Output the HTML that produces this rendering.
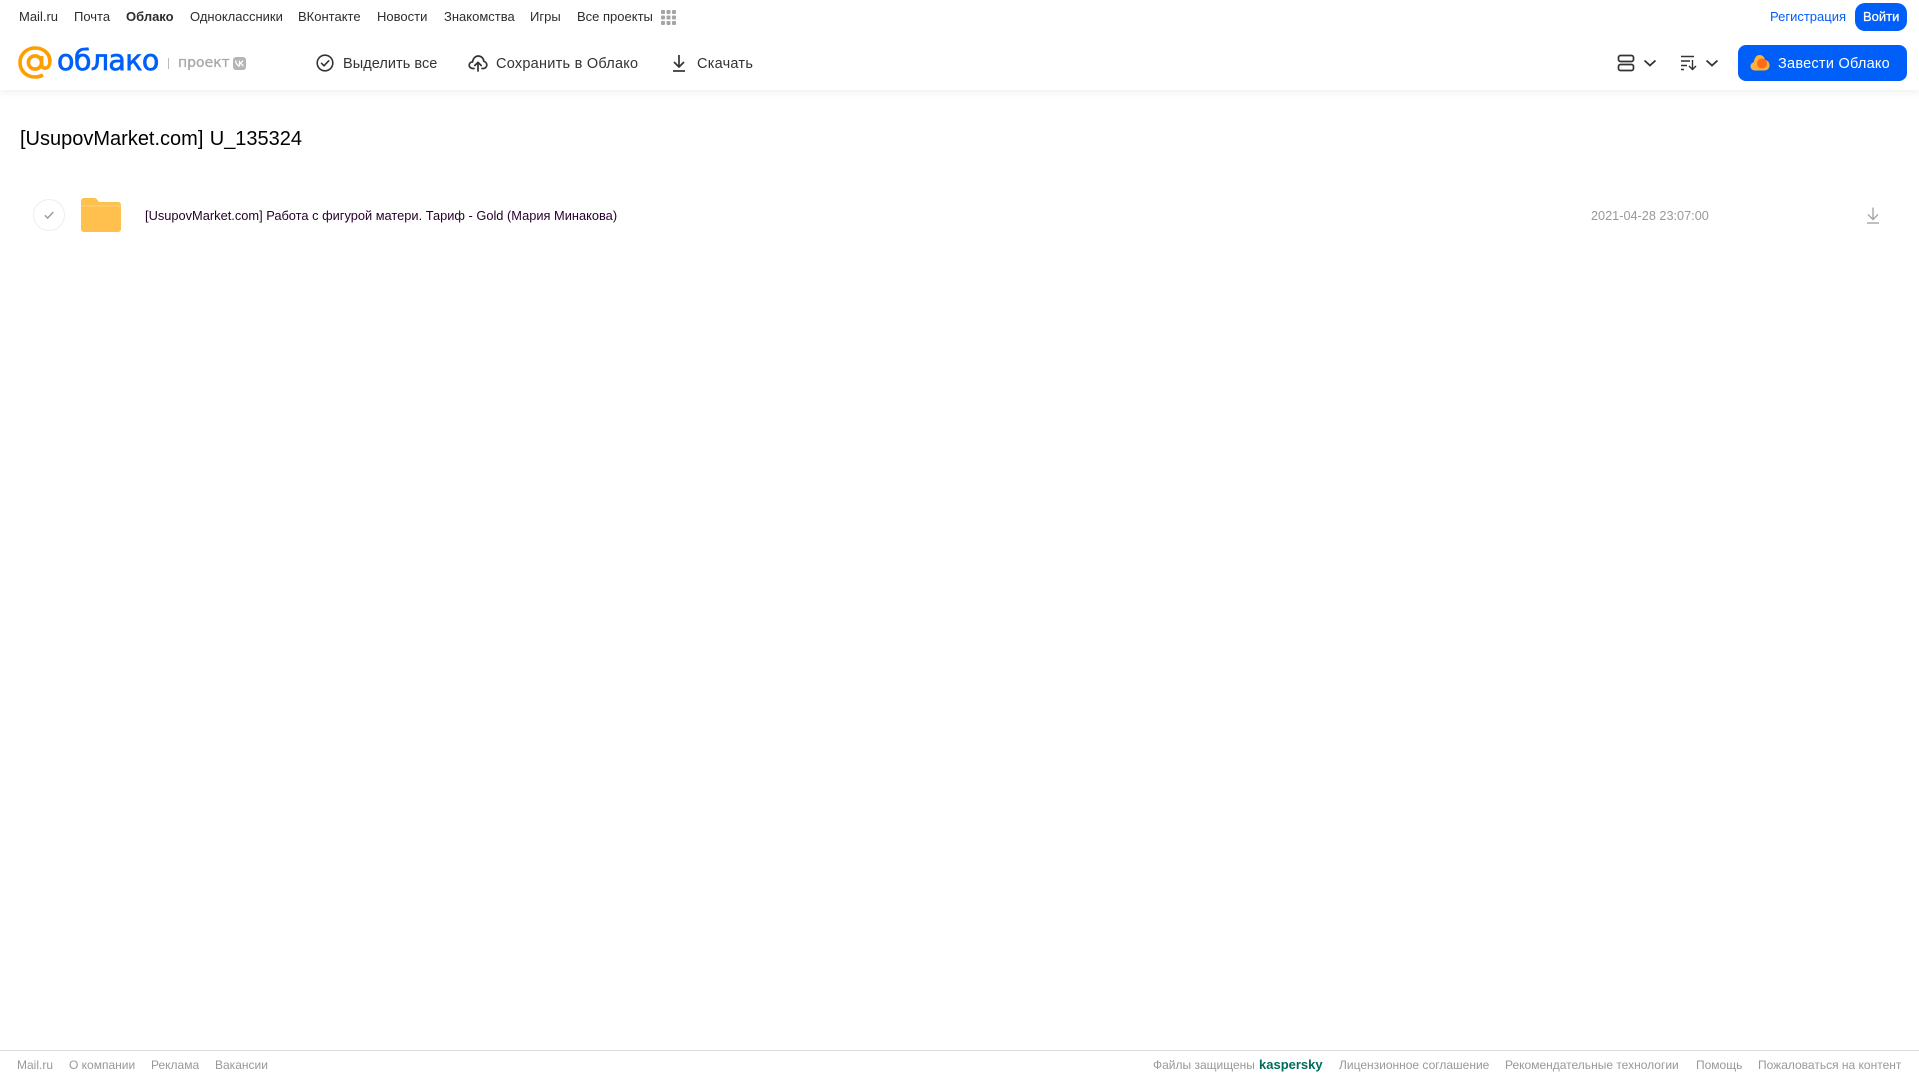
<!DOCTYPE html>
<html lang="ru"><head><meta charset="utf-8"><title>Облако</title>
<style>
html,body{margin:0;padding:0;background:#fff}
body{width:1919px;height:1079px;position:relative;overflow:hidden;font-family:"Liberation Sans",Arial,sans-serif}
.t{position:absolute;white-space:nowrap}
.n{top:9px;font-size:13px;line-height:16px;color:#2c2d2e}
.b{top:55px;font-size:14.5px;line-height:18px;color:#333;letter-spacing:.25px}
.f{top:1057px;font-size:12px;line-height:16px;color:#999}
svg{position:absolute;display:block}
</style></head><body>
<div style="position:absolute;left:0;top:0;width:1919px;height:90px;background:#fff;box-shadow:0 2px 8px rgba(0,0,0,.07)"></div>

<span class="t n" style="left:19px">Mail.ru</span>
<span class="t n" style="left:74px">Почта</span>
<span class="t n" style="left:126px;font-weight:bold">Облако</span>
<span class="t n" style="left:190px">Одноклассники</span>
<span class="t n" style="left:298px">ВКонтакте</span>
<span class="t n" style="left:377px">Новости</span>
<span class="t n" style="left:444px">Знакомства</span>
<span class="t n" style="left:530px">Игры</span>
<span class="t n" style="left:577px">Все проекты</span>
<svg style="left:661px;top:10px" width="15" height="15" fill="#a5a5a5"><rect x="0" y="0" width="4" height="4" rx="1"/><rect x="5.500" y="0" width="4" height="4" rx="1"/><rect x="11" y="0" width="4" height="4" rx="1"/><rect x="0" y="5.500" width="4" height="4" rx="1"/><rect x="5.500" y="5.500" width="4" height="4" rx="1"/><rect x="11" y="5.500" width="4" height="4" rx="1"/><rect x="0" y="11" width="4" height="4" rx="1"/><rect x="5.500" y="11" width="4" height="4" rx="1"/><rect x="11" y="11" width="4" height="4" rx="1"/></svg>

<svg style="left:18px;top:46px" width="35" height="34" viewBox="0 0 35 34" fill="none" stroke="#ff9e00" stroke-width="3.600"><circle cx="17" cy="16.500" r="6.600"/><path d="M23.600 10v8.500c0 5 6.700 5 8-.5C33.500 8.500 26 2 17 2 8.500 2 2 8.500 2 16.500 2 25 8.500 31 17 31c3 0 5.500-.7 8-2"/></svg>
<span class="t" style="left:57px;top:43px;font-family:'DejaVu Sans',sans-serif;font-size:28.500px;line-height:36px;letter-spacing:-.6px;color:#005ff9;-webkit-text-stroke:.7px #005ff9">облако</span>
<div style="position:absolute;left:168px;top:58px;width:1px;height:11px;background:#bbb"></div>
<span class="t" style="left:178px;top:54px;font-family:'DejaVu Sans',sans-serif;font-size:14px;line-height:18px;color:#a8a8a8;-webkit-text-stroke:.3px #a8a8a8">проект</span>
<div style="position:absolute;left:233px;top:57px;width:13px;height:13px;border-radius:3px;background:#b5b5b5"></div>
<svg style="left:235px;top:60px" width="9" height="7" fill="none" stroke="#fff" stroke-width="1.300"><path d="M.5 .5C1 4 3 6 4.500 6V.5M4.500 3C6.500 3 7.500 1.500 8 .5M4.500 3C6.500 3.300 7.500 5 8.300 6.300"/></svg>

<svg style="left:316px;top:54px" width="18" height="18" fill="none" stroke="#333" stroke-width="1.600"><circle cx="9" cy="9" r="7.800"/><path d="M5.500 9.300l2.500 2.500 4.700-5" stroke-linecap="round" stroke-linejoin="round"/></svg>
<span class="t b" style="left:343px;letter-spacing:.05px">Выделить все</span>
<svg style="left:468px;top:54px" width="20" height="18" fill="none" stroke="#333" stroke-width="1.700" stroke-linecap="round" stroke-linejoin="round"><path d="M6 14.500H4.800C2.700 14.500 1.200 13 1.200 11.200 1.200 9.300 2.700 8 4.500 8 5 4.500 7.300 2 10.300 2 13.300 2 15.500 4.300 15.800 7.300 17.500 7.700 18.800 9.200 18.800 11 18.800 13 17.200 14.500 15.300 14.500H14"/><path d="M10 17V8.500M6.800 11.500L10 8.300l3.200 3.200"/></svg>
<span class="t b" style="left:496px">Сохранить в Облако</span>
<svg style="left:671px;top:54px" width="16" height="18" fill="none" stroke="#333" stroke-width="1.700"><path d="M8 1v11.500M3 8l5 5 5-5" stroke-linejoin="round"/><path d="M2 17h12"/></svg>
<span class="t b" style="left:697px">Скачать</span>

<svg style="left:1617px;top:54px" width="18" height="18" fill="none" stroke="#333" stroke-width="1.700"><rect x="1.500" y="1.500" width="15" height="6" rx="2"/><rect x="1.500" y="10.500" width="15" height="6" rx="2"/></svg>
<svg style="left:1643px;top:59px" width="14" height="8" fill="none" stroke="#333" stroke-width="1.800"><path d="M1.500 1.500L7 6.500l5.500-5"/></svg>
<svg style="left:1680px;top:55px" width="18" height="16" fill="none" stroke="#333" stroke-width="1.400"><path d="M1 1.500h13M1 6h9M1 10.500h6M1 14.500h3M12.500 5v9.500M9 11l3.500 3.500L16 11"/></svg>
<svg style="left:1705px;top:59px" width="14" height="8" fill="none" stroke="#333" stroke-width="1.800"><path d="M1.500 1.500L7 6.500l5.500-5"/></svg>

<span class="t n" style="left:1770px;color:#005ff9">Регистрация</span>
<div style="position:absolute;left:1855px;top:3px;width:52px;height:28px;border-radius:10px;background:#005ff9"></div>
<span class="t n" style="left:1863px;color:#fff;-webkit-text-stroke:.25px #fff">Войти</span>
<div style="position:absolute;left:1738px;top:45px;width:169px;height:36px;border-radius:8px;background:#005ff9"></div>
<svg style="left:1750px;top:54px" width="20" height="17"><path d="M5 16.500C2 16.500 .5 14.500 .5 12.300 .5 10 2 8.500 3.800 8.200 4.300 4 6.500 1 9.500 1 12.500 1 14.500 3 15 6 17.800 6.500 19.500 8.500 19.500 11.300 19.500 14.300 17.500 16.500 14.500 16.500Z" fill="#ffb03a"/><circle cx="12" cy="9.500" r="5" fill="#ff6a1a"/></svg>
<span class="t b" style="left:1778px;color:#fff">Завести Облако</span>

<span class="t" style="left:20px;top:126px;font-size:20px;line-height:26px;color:#000;word-spacing:.8px">[UsupovMarket.com] U_135324</span>

<svg style="left:33px;top:199px" width="32" height="32" fill="none"><circle cx="16" cy="16" r="15.500" stroke="#eeeeee"/><path d="M11.800 16.300l2.900 2.800 5.500-6" stroke="#999" stroke-width="1.400"/></svg>
<svg style="left:81px;top:198px" width="40" height="34"><path d="M0 3C0 1.300 1.300 0 3 0h10c1.500 0 2.500.8 3.500 2L18 4h19c1.700 0 3 1.300 3 3v24c0 1.700-1.300 3-3 3H3c-1.700 0-3-1.300-3-3Z" fill="#ffc04d"/><path d="M0 8h40" stroke="#ffd27a" stroke-width="1"/></svg>
<span class="t" style="left:145px;top:208px;font-size:12.830px;line-height:16px;color:#26002b">[UsupovMarket.com] Работа с фигурой матери. Тариф - Gold (Мария Минакова)</span>
<span class="t" style="left:1591px;top:208px;font-size:12.700px;line-height:16px;color:#999">2021-04-28 23:07:00</span>
<svg style="left:1866px;top:207px" width="14" height="17" fill="none" stroke="#a5a5a5" stroke-width="1.400"><path d="M7 .5v11.500M2 7.500l5 5 5-5"/><path d="M1 16h12"/></svg>

<div style="position:absolute;left:0;top:1050px;width:1919px;height:1px;background:#dcdcdc"></div>
<span class="t f" style="left:17px">Mail.ru</span>
<span class="t f" style="left:69px">О компании</span>
<span class="t f" style="left:151px">Реклама</span>
<span class="t f" style="left:215px">Вакансии</span>
<span class="t f" style="left:1153px">Файлы защищены</span>
<span class="t f" style="left:1259px;font-weight:bold;color:#006d5c;font-size:13px">kaspersky</span>
<span class="t f" style="left:1339px">Лицензионное соглашение</span>
<span class="t f" style="left:1505px">Рекомендательные технологии</span>
<span class="t f" style="left:1696px">Помощь</span>
<span class="t f" style="left:1758px">Пожаловаться на контент</span>
</body></html>
